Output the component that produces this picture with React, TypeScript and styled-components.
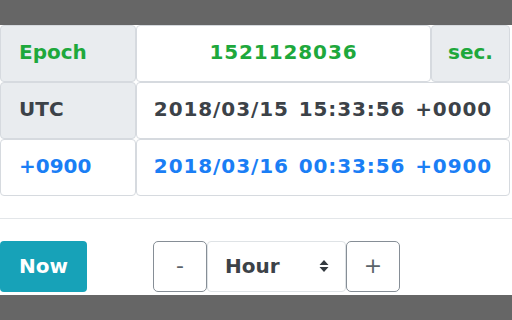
import React, { useState } from "react"
import styled, { createGlobalStyle } from "styled-components"

const GlobalStyle = createGlobalStyle`
  html, body {
    margin: 0;
    padding: 0;
    background: #666;
    font-family: "DejaVu Sans", "Liberation Sans", sans-serif;
  }
`

const Frame = styled.div`
  width: 512px;
  height: 320px;
  display: flex;
  flex-direction: column;
  background: #666;
  overflow: hidden;
`

const Content = styled.div`
  margin-top: 25px;
  height: 270px;
  background: #fff;
  display: flex;
  flex-direction: column;
  overflow: hidden;
`

const Table = styled.div`
  width: 510px;
  display: flex;
  flex-direction: column;
`

const Row = styled.div`
  display: flex;
  height: 57px;
`

const Cell = styled.div<{ $tone: "green" | "dark" | "blue"; $shade?: boolean; $center?: boolean }>`
  box-sizing: border-box;
  display: flex;
  align-items: center;
  justify-content: ${(p) => (p.$center ? "center" : "flex-start")};
  padding: 0 18px 3px;
  border: 1px solid #d6dadf;
  border-radius: 4px;
  background: ${(p) => (p.$shade ? "#e9ecef" : "#fff")};
  color: ${(p) =>
    p.$tone === "green" ? "#1ea83c" : p.$tone === "blue" ? "#1a7ef5" : "#3c4248"};
  font-size: 20px;
  font-weight: 700;
  white-space: nowrap;
`

const Label = styled(Cell)`
  width: 136px;
  flex: none;
`

const Value = styled(Cell)`
  flex: 1;
  padding: 0 4px 3px;
  letter-spacing: 0.9px;
  word-spacing: 2px;
`

const Unit = styled(Cell)`
  width: 79px;
  flex: none;
  padding: 0 0 3px;
  justify-content: center;
`

const Rule = styled.div`
  margin-top: 22px;
  height: 1px;
  background: #e3e6e9;
`

const Controls = styled.div`
  display: flex;
  align-items: center;
  margin-top: 22px;
  height: 51px;
`

const NowButton = styled.button`
  width: 87px;
  height: 51px;
  border: none;
  border-radius: 4px;
  background: #17a2b8;
  color: #fff;
  font-family: inherit;
  font-size: 20px;
  font-weight: 700;
  padding: 0 0 2px;
`

const Stepper = styled.div`
  display: flex;
  margin-left: 66px;
  height: 51px;
`

const StepButton = styled.button`
  width: 54px;
  height: 51px;
  box-sizing: border-box;
  border: 1.5px solid #868e96;
  border-radius: 5px;
  background: #fff;
  color: #5b636a;
  font-family: inherit;
  font-size: 22px;
  font-weight: 400;
  padding: 0 0 2px;
`

const UnitSelect = styled.div`
  width: 139px;
  box-sizing: border-box;
  border: 1px solid #dfe3e6;
  border-radius: 4px;
  display: flex;
  align-items: center;
  justify-content: space-between;
  padding: 0 16px 2px 17px;
  color: #3c4248;
  font-size: 20px;
  font-weight: 700;
`

const Caret = () => (
  <svg width="10" height="14" viewBox="0 0 10 14">
    <path d="M5 1 L9.5 6 H0.5 Z M5 13 L9.5 8 H0.5 Z" fill="#343a40" />
  </svg>
)

export default function App() {
  const [unit] = useState("Hour")
  return (
    <>
      <GlobalStyle />
      <Frame>
        <Content>
          <Table>
            <Row>
              <Label $tone="green" $shade>Epoch</Label>
              <Value $tone="green" $center>1521128036</Value>
              <Unit $tone="green" $shade>sec.</Unit>
            </Row>
            <Row>
              <Label $tone="dark" $shade>UTC</Label>
              <Value $tone="dark" $center>2018/03/15 15:33:56 +0000</Value>
            </Row>
            <Row>
              <Label $tone="blue">+0900</Label>
              <Value $tone="blue" $center>2018/03/16 00:33:56 +0900</Value>
            </Row>
          </Table>
          <Rule />
          <Controls>
            <NowButton>Now</NowButton>
            <Stepper>
              <StepButton>-</StepButton>
              <UnitSelect>
                {unit}
                <Caret />
              </UnitSelect>
              <StepButton>+</StepButton>
            </Stepper>
          </Controls>
        </Content>
      </Frame>
    </>
  )
}
